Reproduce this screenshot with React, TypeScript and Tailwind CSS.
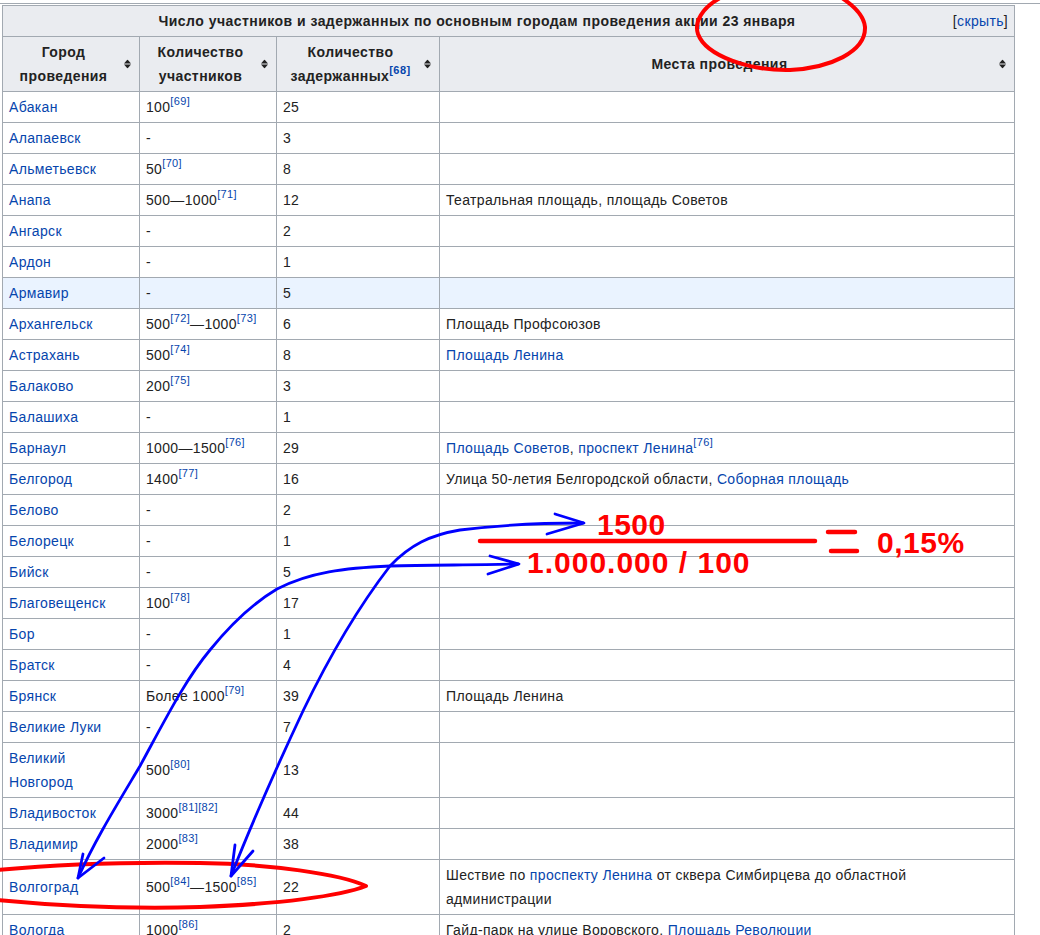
import type { ReactNode } from 'react';

const font = "font-['Liberation_Sans',Arial,sans-serif]";

function A({ children }: { children: ReactNode }) {
    return <a className="text-[#0645ad]">{children}</a>;
}

function Ref({ n }: { n: number }) {
    return (
        <sup className="-top-[7px] text-[11px] text-[#0645ad]">[{n}]</sup>
    );
}

interface Row {
    city: ReactNode;
    count: ReactNode;
    held: number;
    place?: ReactNode;
    hover?: boolean;
}

const rows: Row[] = [
    { city: 'Абакан', count: <>100<Ref n={69} /></>, held: 25 },
    { city: 'Алапаевск', count: '-', held: 3 },
    { city: 'Альметьевск', count: <>50<Ref n={70} /></>, held: 8 },
    { city: 'Анапа', count: <>500—1000<Ref n={71} /></>, held: 12, place: 'Театральная площадь, площадь Советов' },
    { city: 'Ангарск', count: '-', held: 2 },
    { city: 'Ардон', count: '-', held: 1 },
    { city: 'Армавир', count: '-', held: 5, hover: true },
    { city: 'Архангельск', count: <>500<Ref n={72} />—1000<Ref n={73} /></>, held: 6, place: 'Площадь Профсоюзов' },
    { city: 'Астрахань', count: <>500<Ref n={74} /></>, held: 8, place: <A>Площадь Ленина</A> },
    { city: 'Балаково', count: <>200<Ref n={75} /></>, held: 3 },
    { city: 'Балашиха', count: '-', held: 1 },
    { city: 'Барнаул', count: <>1000—1500<Ref n={76} /></>, held: 29, place: <><A>Площадь Советов</A>, <A>проспект Ленина</A><Ref n={76} /></> },
    { city: 'Белгород', count: <>1400<Ref n={77} /></>, held: 16, place: <>Улица 50-летия Белгородской области, <A>Соборная площадь</A></> },
    { city: 'Белово', count: '-', held: 2 },
    { city: 'Белорецк', count: '-', held: 1 },
    { city: 'Бийск', count: '-', held: 5 },
    { city: 'Благовещенск', count: <>100<Ref n={78} /></>, held: 17 },
    { city: 'Бор', count: '-', held: 1 },
    { city: 'Братск', count: '-', held: 4 },
    { city: 'Брянск', count: <>Более 1000<Ref n={79} /></>, held: 39, place: 'Площадь Ленина' },
    { city: 'Великие Луки', count: '-', held: 7 },
    { city: <>Великий<br />Новгород</>, count: <>500<Ref n={80} /></>, held: 13 },
    { city: 'Владивосток', count: <>3000<Ref n={81} /><Ref n={82} /></>, held: 44 },
    { city: 'Владимир', count: <>2000<Ref n={83} /></>, held: 38 },
    {
        city: 'Волгоград',
        count: <>500<Ref n={84} />—1500<Ref n={85} /></>,
        held: 22,
        place: <>Шествие по <A>проспекту Ленина</A> от сквера Симбирцева до областной администрации</>,
    },
    { city: 'Вологда', count: <>1000<Ref n={86} /></>, held: 2, place: <>Гайд-парк на улице Воровского, <A>Площадь Революции</A></> },
];

function SortIcon() {
    return (
        <svg className="absolute right-[8px] top-1/2 -translate-y-1/2" width="7" height="9" viewBox="0 0 7 9">
            <path d="M3.5 0 L7 4 H0 Z M3.5 9 L0 5 H7 Z" fill="#222" />
        </svg>
    );
}

function HeadCell({ children }: { children: ReactNode }) {
    return (
        <th className="relative border border-[#a2a9b1] bg-[#eaecf0] py-[3px] pl-[6px] pr-[21px] text-center align-middle font-bold tracking-[0.42px]">
            {children}
            <SortIcon />
        </th>
    );
}

// red and blue pen marks drawn on top of the screenshot
function Annotations() {
    return (
        <svg className="absolute left-0 top-0" width="1040" height="935" viewBox="0 0 1040 935" fill="none">
            <g stroke="#ff0000" strokeWidth="4" strokeLinecap="round" strokeLinejoin="round">
                <path d="M720 -2 C702 8 694 22 698 34 C706 56 750 71 790 70 C830 68 866 52 865 27 C864 16 854 6 842 -2" />
                <path d="M-2 870 C60 864 130 862 200 863 C270 864 340 874 366 886 C340 896 280 904 200 907 C130 909 60 906 -2 900" />
                <path d="M480 541 H815" strokeWidth="4.5" />
                <path d="M828 532 H855 M831 551 H857" strokeWidth="4.5" />
            </g>
            <g stroke="#0000ff" strokeWidth="2.8" strokeLinecap="round" strokeLinejoin="round">
                <path d="M231 876 C255 815 280 760 303 711 C330 655 360 605 390 566 C410 545 430 535 460 530 C500 525 540 523 583 523" />
                <path d="M555 514 L584 523 L547 534" />
                <path d="M235 845 L231 876 L253 851" />
                <path d="M78 878 C95 840 118 803 140 766 C165 720 185 680 210 650 C232 623 255 602 277 589 C310 572 345 568 390 566 C430 565 480 565 518 564" />
                <path d="M490 556 L519 564 L488 574" />
                <path d="M83 854 L78 878 L104 858" />
            </g>
        </svg>
    );
}

export default function App() {
    return (
        <div className={`relative h-[935px] w-[1040px] overflow-hidden bg-white text-[14px] leading-[24px] tracking-[0.33px] text-[#222] ${font}`}>
            <div className="h-[1px] bg-[#a2a9b1] absolute left-0 right-0 top-[3px]" />
            <div className="pl-[2px] pt-[5px]">
                <table className="w-[1013px] table-fixed border-collapse">
                    <colgroup>
                        <col className="w-[137px]" />
                        <col className="w-[137px]" />
                        <col className="w-[163px]" />
                        <col />
                    </colgroup>
                    <thead>
                        <tr className="h-[31px]">
                            <th colSpan={4} className="border border-[#a2a9b1] bg-[#eaecf0] px-[6px] py-[3px] text-center font-bold tracking-[0.46px]">
                                <span className="float-right ml-[8px] font-normal tracking-[0.33px]">
                                    [<A>скрыть</A>]
                                </span>
                                Число участников и задержанных по основным городам проведения акции 23 января
                            </th>
                        </tr>
                        <tr className="h-[55px]">
                            <HeadCell>Город проведения</HeadCell>
                            <HeadCell>Количество участников</HeadCell>
                            <HeadCell>Количество задержанных<Ref n={68} /></HeadCell>
                            <HeadCell>Места проведения</HeadCell>
                        </tr>
                    </thead>
                    <tbody>
                        {rows.map((row, i) => (
                            <tr key={i} className={row.hover ? 'bg-[#eaf3ff]' : 'bg-white'}>
                                <td className="border border-[#a2a9b1] px-[6px] py-[3px] text-[#0645ad]">{row.city}</td>
                                <td className="border border-[#a2a9b1] px-[6px] py-[3px]">{row.count}</td>
                                <td className="border border-[#a2a9b1] px-[6px] py-[3px]">{row.held}</td>
                                <td className="border border-[#a2a9b1] px-[6px] py-[3px]">{row.place}</td>
                            </tr>
                        ))}
                    </tbody>
                </table>
            </div>
            <Annotations />
            <div className="absolute left-[597px] top-[507px] text-[30px] font-bold leading-[36px] tracking-[0.5px] text-[#ff0000]">1500</div>
            <div className="absolute left-[527px] top-[545px] text-[30px] font-bold leading-[36px] tracking-[1px] text-[#ff0000]">1.000.000 / 100</div>
            <div className="absolute left-[877px] top-[525px] text-[30px] font-bold leading-[36px] tracking-[0.5px] text-[#ff0000]">0,15%</div>
        </div>
    );
}
